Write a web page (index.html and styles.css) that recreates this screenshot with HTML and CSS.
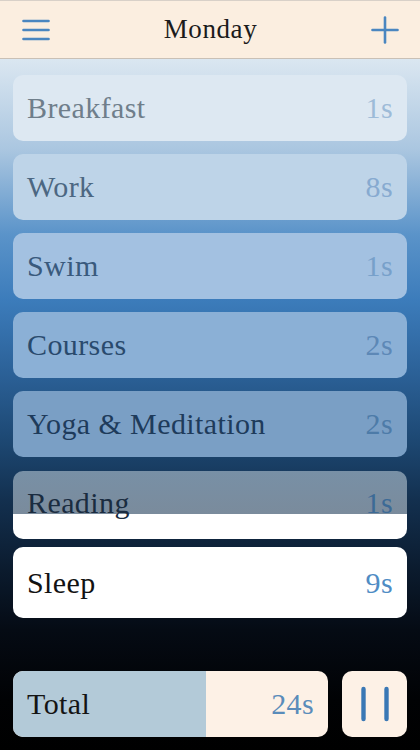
FILE: index.html
```html
<!DOCTYPE html>
<html lang="en">
<head>
<meta charset="utf-8">
<title>Monday</title>
<link rel="stylesheet" href="styles.css">
</head>
<body>
<div class="app">
  <header class="topbar">
    <button class="icon-btn" aria-label="Menu">
      <svg width="28" height="22" viewBox="0 0 28 22"><g stroke="#4a86c0" stroke-width="2.6" stroke-linecap="round"><line x1="1.5" y1="2" x2="26.5" y2="2"/><line x1="1.5" y1="11" x2="26.5" y2="11"/><line x1="1.5" y1="20" x2="26.5" y2="20"/></g></svg>
    </button>
    <h1 class="title">Monday</h1>
    <button class="icon-btn" aria-label="Add">
      <svg width="28" height="28" viewBox="0 0 28 28"><g stroke="#4a86c0" stroke-width="2.6" stroke-linecap="round"><line x1="14" y1="1.5" x2="14" y2="26.5"/><line x1="1.5" y1="14" x2="26.5" y2="14"/></g></svg>
    </button>
  </header>

  <main class="list">
    <div class="row r1"><span class="name">Breakfast</span><span class="val">1s</span></div>
    <div class="row r2"><span class="name">Work</span><span class="val">8s</span></div>
    <div class="row r3"><span class="name">Swim</span><span class="val">1s</span></div>
    <div class="row r4"><span class="name">Courses</span><span class="val">2s</span></div>
    <div class="row r5"><span class="name">Yoga &amp; Meditation</span><span class="val">2s</span></div>
    <div class="row r6"><span class="name">Reading</span><span class="val">1s</span></div>
    <div class="row r7"><span class="name">Sleep</span><span class="val">9s</span></div>
  </main>

  <footer class="bottom">
    <div class="total">
      <div class="progress" style="width: 61.3%"></div>
      <span class="name">Total</span><span class="val">24s</span>
    </div>
    <button class="pause" aria-label="Pause">
      <svg width="28" height="36" viewBox="0 0 28 36"><g stroke="#3a78b5" stroke-width="4.4" stroke-linecap="round"><line x1="2.5" y1="3" x2="2.5" y2="33"/><line x1="25.5" y1="3" x2="25.5" y2="33"/></g></svg>
    </button>
  </footer>
</div>
</body>
</html>
```

FILE: styles.css
```css
* { box-sizing: border-box; }
html, body { margin: 0; padding: 0; }
body {
  width: 420px;
  height: 750px;
  overflow: hidden;
  font-family: "Liberation Serif", "Times New Roman", serif;
  background: #000;
}
.app {
  width: 420px;
  height: 750px;
  display: flex;
  flex-direction: column;
  background: linear-gradient(to bottom,
    #dbe7f1 58px,
    #aac6e0 150px,
    #5a93c9 235px,
    #3c7cbb 300px,
    #2c6299 370px,
    #1d4873 440px,
    #13304f 500px,
    #0b1b2e 570px,
    #050b14 630px,
    #010204 700px,
    #000 750px);
}
.topbar {
  height: 59px;
  flex: none;
  background: #fbeee0;
  border-top: 1px solid #d8d0c8;
  border-bottom: 1px solid #c9c0b6;
  display: flex;
  align-items: center;
  justify-content: space-between;
  padding: 0 20px 0 21px;
}
.icon-btn {
  border: 0;
  background: none;
  padding: 0;
  display: flex;
  align-items: center;
  justify-content: center;
  width: 30px;
  height: 30px;
}
.title {
  margin: 0;
  font-size: 27px;
  font-weight: normal;
  letter-spacing: 0.6px;
  color: #1b1b1b;
}
.list {
  flex: none;
  display: flex;
  flex-direction: column;
  gap: 13px;
  padding: 16px 13px 0;
}
.row, .total {
  height: 66px;
  border-radius: 10px;
  display: flex;
  align-items: center;
  justify-content: space-between;
  padding: 0 14px;
  font-size: 30px;
  letter-spacing: 0.4px;
}
.r1 { background: #dde8f2; color: #6f7e8b; }
.r1 .val { color: #9dbbd8; }
.r2 { background: #bed4e8; color: #4c6782; }
.r2 .val { color: #87aad0; }
.r3 { background: #a3c1e1; color: #395a7d; }
.r3 .val { color: #77a0ca; }
.r4 { background: #8bb0d6; color: #294a6d; }
.r4 .val { color: #5d88b6; }
.r5 { background: #7a9fc5; color: #1e3b5b; }
.r5 .val { color: #4d7ba8; }
.r6 {
  height: 68px;
  margin-top: 1px;
  color: #1a2c40;
  background: linear-gradient(to bottom, #7890a6 0, #7a8b9c 43px, #ffffff 43px, #ffffff 100%);
  padding-bottom: 4px;
}
.r6 .val { color: #3c6a96; }
.r7 {
  height: 71px;
  margin-top: -5px;
  background: #ffffff;
  color: #121212;
}
.r7 .val { color: #4f8cc4; }
.bottom {
  margin-top: auto;
  display: flex;
  gap: 14px;
  padding: 0 13px 13px;
}
.total {
  flex: 1;
  position: relative;
  overflow: hidden;
  background: #fdf1e6;
  color: #141414;
}
.total .progress {
  position: absolute;
  left: 0;
  top: 0;
  bottom: 0;
  background: #b3cad8;
}
.total .name, .total .val { position: relative; }
.total .val { color: #5a8cba; }
.pause {
  width: 65px;
  height: 66px;
  flex: none;
  border: 0;
  border-radius: 10px;
  background: #fdf1e6;
  display: flex;
  align-items: center;
  justify-content: center;
  padding: 0 0 0 1px;
}
```
